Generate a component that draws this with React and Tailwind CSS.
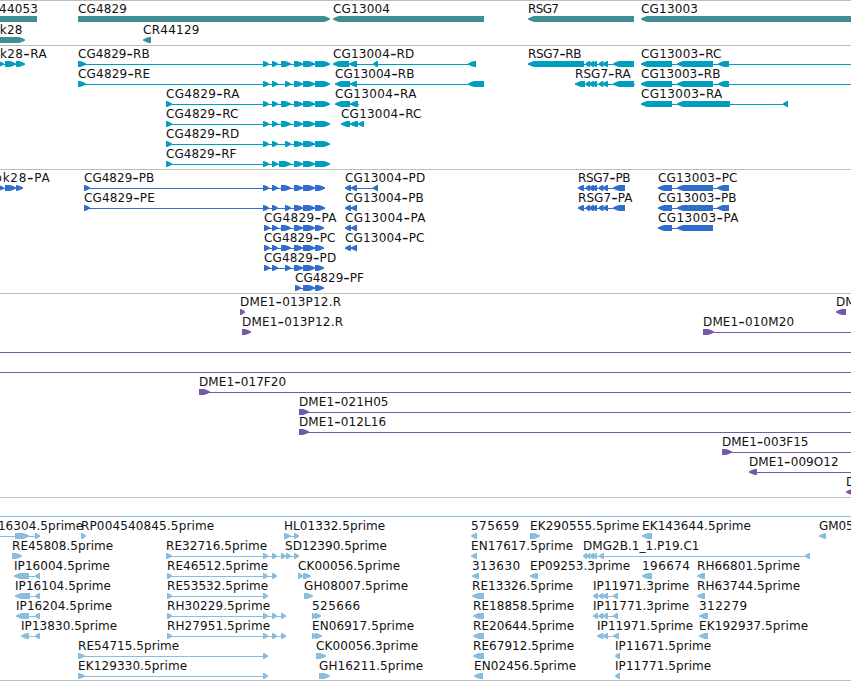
import React from 'react';

// feature: [row, label, label x, label end, strand, exons, line start, line end]
const head = [[263, 269], [272, 278]];
const tail = [[294, 303], [303, 315]];
const rsg7 = [[585.5, 590], [589, 594], [592.5, 597], [598.5, 603.5], [603, 608]];
const ip = [[593, 598], [598.5, 603.5], [603, 608], [613, 618]];

const tracks = [
  {
    name: 'genes',
    height: 45,
    pitch: 21,
    color: '#3f8e93',
    features: [
      [0, 'CR44053', -18, 38, '-', [[-18, 37]]],
      [0, 'CG4829', 78, 127, '+', [[78, 330]]],
      [0, 'CG13004', 333, 390, '-', [[333, 484]]],
      [0, 'RSG7', 528, 559, '-', [[528, 634]]],
      [0, 'CG13003', 641, 698, '-', [[641, 870]]],
      [1, 'ppk28', -16, 22.5, '+', [[-16, 25]]],
      [1, 'CR44129', 143, 199.5, '-', [[143, 151]]],
    ],
  },
  {
    name: 'transcripts',
    height: 124,
    pitch: 20,
    color: '#009fc0',
    features: [
      [0, 'ppk28-RA', -16, 46.7, '+', [[-2, 4], [5, 16], [16, 25]], -16],
      [0, 'CG4829-RB', 78, 149.7, '+', [[78, 86], ...head, [281, 291], ...tail, [315, 330]]],
      [1, 'CG4829-RE', 78, 150.2, '+', [[78, 86], ...head, [285, 291], ...tail, [315, 330]]],
      [2, 'CG4829-RA', 166, 239.5, '+', [[166, 172], ...head, [281, 291], ...tail, [315, 330]]],
      [3, 'CG4829-RC', 166, 238.5, '+', [[166, 172], ...head, [281, 291], ...tail, [315, 330]]],
      [4, 'CG4829-RD', 166, 239.2, '+', [[166, 172], ...head, [285, 291], ...tail, [315, 330]]],
      [5, 'CG4829-RF', 166, 236.5, '+', [[166, 172], ...head, [279, 291], ...tail, [315, 330]]],
      [0, 'CG13004-RD', 333, 414.3, '-', [[333, 349], [349, 357], [373, 378], [468, 476]]],
      [1, 'CG13004-RB', 335, 414.5, '-', [[335, 350], [350, 357], [468, 484]]],
      [2, 'CG13004-RA', 335, 416.5, '-', [[335, 350], [350, 358]], 335, 359],
      [3, 'CG13004-RC', 341, 421.5, '-', [[341, 350], [350, 358], [358, 364]]],
      [0, 'RSG7-RB', 528, 581.5, '-', [[528, 584], ...rsg7, [613, 634]]],
      [1, 'RSG7-RA', 575, 630.7, '-', [[575, 585], ...rsg7, [613, 634]], 575, 635],
      [0, 'CG13003-RC', 641, 721.5, '-', [[641, 672], [677, 713], [718, 729]], 641, 851],
      [1, 'CG13003-RB', 641, 720.5, '-', [[641, 672], [677, 713], [718, 729]], 641, 851],
      [2, 'CG13003-RA', 641, 722.3, '-', [[641, 672], [677, 730], [783, 788]]],
    ],
  },
  {
    name: 'proteins',
    height: 124,
    pitch: 20,
    color: '#306dcd',
    features: [
      [0, 'ppk28-PA', -14, 49.7, '+', [[-2, 4], [5, 16], [16, 23]], -12],
      [0, 'CG4829-PB', 84, 154.3, '+', [[84, 90], ...head, [281, 291], ...tail, [315, 325]]],
      [1, 'CG4829-PE', 84, 154.8, '+', [[84, 90], ...head, [285, 291], ...tail, [315, 325]]],
      [2, 'CG4829-PA', 264, 336.5, '+', [[264, 270], [272, 278], [281, 291], ...tail, [315, 324]]],
      [3, 'CG4829-PC', 264, 335.5, '+', [[264, 270], [272, 278], [281, 291], ...tail, [315, 324]]],
      [4, 'CG4829-PD', 264, 336.2, '+', [[264, 270], [272, 278], [285, 291], ...tail, [315, 324]]],
      [5, 'CG4829-PF', 295, 364, '+', [[295, 301], [303, 315], [315, 324]]],
      [0, 'CG13004-PD', 345, 425.2, '-', [[345, 351], [351, 357], [373, 378]]],
      [1, 'CG13004-PB', 345, 423.7, '-', [[345, 351], [351, 357]]],
      [2, 'CG13004-PA', 345, 425.5, '-', [[345, 351], [351, 357]]],
      [3, 'CG13004-PC', 345, 424.5, '-', [[345, 351], [351, 357]]],
      [0, 'RSG7-PB', 578, 630.5, '-', [[578, 584], ...rsg7, [613, 625]]],
      [1, 'RSG7-PA', 578, 632.5, '-', [[578, 584], ...rsg7, [613, 625]]],
      [0, 'CG13003-PC', 658, 737.5, '-', [[658, 672], [677, 713], [717, 729]]],
      [1, 'CG13003-PB', 658, 736.5, '-', [[658, 672], [677, 713], [717, 729]]],
      [2, 'CG13003-PA', 658, 738.5, '-', [[658, 672], [677, 713]]],
    ],
  },
  {
    name: 'bacs',
    height: 204,
    pitch: 20,
    color: '#7459a8',
    features: [
      [0, 'DME1-013P12.R', 240, 341, '+', [[240, 245]]],
      [1, 'DME1-013P12.R', 242, 343, '+', [[242, 251]]],
      [0, 'DME1-013L19', 836, 922, '-', [[836, 846]]],
      [1, 'DME1-010M20', 703, 794.2, '+', [[703, 714]], 703, 851],
      [2, '', 0, 0, '+', [], 0, 851],
      [3, '', 0, 0, '+', [], 0, 851],
      [4, 'DME1-017F20', 199, 286.2, '+', [[199, 210]], 199, 851],
      [5, 'DME1-021H05', 299, 388.5, '+', [[299, 309]], 299, 851],
      [6, 'DME1-012L16', 299, 386.2, '+', [[299, 309]], 299, 851],
      [7, 'DME1-003F15', 722, 808.5, '+', [[722, 732]], 722, 851],
      [8, 'DME1-009O12', 749, 838.7, '-', [[749, 757]], 749, 851],
      [9, 'DME1-014K05', 846, 934, '-', [[846, 856]]],
    ],
  },
  {
    name: 'ests',
    height: 183,
    pitch: 20,
    color: '#88bddd',
    features: [
      [0, '', 0, 0, '+', [], 0, 851],
      [1, 'IP16304.5prime', -13, 83.2, '+', [[15, 29], [35, 40]], -13],
      [1, 'RP004540845.5prime', 81, 214.2, '+', [[81, 86]]],
      [1, 'HL01332.5prime', 284, 385.2, '+', [[284, 291], [294, 299]]],
      [1, '575659', 471, 519.2, '-', [[471, 477]]],
      [1, 'EK290555.5prime', 530, 639.2, '+', [[530, 540]]],
      [1, 'EK143644.5prime', 642, 751, '-', [[642, 652]]],
      [1, 'GM05412.5prime', 819, 922, '-', [[819, 826]]],
      [2, 'RE45808.5prime', 12, 113.2, '+', [[12, 22]]],
      [2, 'RE32716.5prime', 166, 267.2, '+', [[166, 172], [263, 268], [272, 277], [281, 286]]],
      [2, 'SD12390.5prime', 285, 387, '+', [[286, 291], [294, 299]]],
      [2, 'EN17617.5prime', 471, 573.2, '-', [[471, 477]]],
      [2, 'DMG2B.1_1.P19.C1', 583, 699.5, '-', [[583, 587], [586.5, 590.5], [590, 594], [593, 597], [599, 604], [805, 810]]],
      [3, 'IP16004.5prime', 14, 110, '-', [[14, 29], [35, 40]]],
      [3, 'RE46512.5prime', 167, 268.2, '+', [[167, 172], [263, 268], [272, 277]]],
      [3, 'CK00056.5prime', 298, 400.2, '+', [[298, 303], [303, 311]]],
      [3, '313630', 472, 520.2, '-', [[472, 479]]],
      [3, 'EP09253.3prime', 530, 630.2, '-', [[530, 538]]],
      [3, '196674', 642, 690, '-', [[642, 652]]],
      [3, 'RH66801.5prime', 697, 800.2, '-', [[697, 705]]],
      [4, 'IP16104.5prime', 15, 111, '-', [[15, 30], [35, 40]]],
      [4, 'RE53532.5prime', 167, 268.2, '+', [[167, 172], [263, 268]]],
      [4, 'GH08007.5prime', 304, 408.2, '+', [[304, 313]]],
      [4, 'RE13326.5prime', 472, 573.2, '-', [[472, 484]]],
      [4, 'IP11971.3prime', 593, 689.2, '-', ip],
      [4, 'RH63744.5prime', 697, 800.2, '-', [[697, 705]]],
      [5, 'IP16204.5prime', 16, 112.2, '-', [[16, 29], [35, 40]]],
      [5, 'RH30229.5prime', 167, 270.2, '+', [[167, 172], [263, 268], [272, 277], [281, 286]]],
      [5, '525666', 312, 360.2, '+', [[312, 316], [315, 321]]],
      [5, 'RE18858.5prime', 473, 574.2, '-', [[473, 484]]],
      [5, 'IP11771.3prime', 593, 689.2, '-', ip],
      [5, '312279', 699, 747.2, '-', [[699, 708]]],
      [6, 'IP13830.5prime', 21, 117.2, '-', [[21, 29], [35, 40]]],
      [6, 'RH27951.5prime', 167, 270.2, '+', [[167, 172], [263, 268], [272, 277], [281, 286]]],
      [6, 'EN06917.5prime', 312, 414.2, '+', [[312, 316], [315, 322]]],
      [6, 'RE20644.5prime', 473, 574.2, '-', [[473, 484]]],
      [6, 'IP11971.5prime', 597, 693.2, '-', [[597, 603.5], [603, 608], [613, 619]]],
      [6, 'EK192937.5prime', 699, 808.2, '-', [[699, 708]]],
      [7, 'RE54715.5prime', 78, 179.2, '+', [[78, 85], [263, 268]]],
      [7, 'CK00056.3prime', 316, 418.2, '+', [[316, 326]]],
      [7, 'RE67912.5prime', 473, 574.2, '-', [[473, 484]]],
      [7, 'IP11671.5prime', 615, 711.2, '-', [[615, 620]]],
      [8, 'EK129330.5prime', 78, 187.2, '+', [[78, 85], [263, 268]]],
      [8, 'GH16211.5prime', 319, 423.2, '+', [[319, 330]]],
      [8, 'EN02456.5prime', 474, 576.2, '-', [[474, 483]]],
      [8, 'IP11771.5prime', 615, 711.2, '-', [[615, 620]]],
    ],
  },
];

const exonPoints = (x0, x1, y, strand) => {
  const tip = Math.min(x1 - x0 - 1, 6);
  return strand === '+'
    ? `${x0},${y} ${x1 - tip},${y} ${x1 - tip / 2},${y + 1} ${x1},${y + 2.5} ${x1},${y + 3.5} ${x1 - tip / 2},${y + 5} ${x1 - tip},${y + 6} ${x0},${y + 6}`
    : `${x1},${y} ${x0 + tip},${y} ${x0 + tip / 2},${y + 1} ${x0},${y + 2.5} ${x0},${y + 3.5} ${x0 + tip / 2},${y + 5} ${x0 + tip},${y + 6} ${x1},${y + 6}`;
};

// the dash is drawn wider than the font's own hyphen
const Label = ({ x, y, end, text }) => {
  const [name, suffix] = text.split('-');
  return (
    <text x={x} y={y} textLength={end - x} className="fill-[#111]">
      {name}
      {suffix && (
        <>
          <tspan dy="1" className="text-[18px]">-</tspan>
          <tspan dy="-1">{suffix}</tspan>
        </>
      )}
    </text>
  );
};

const Feature = ({ feature, pitch }) => {
  const [row, label, x, end, strand, exons, from, to] = feature;
  const y = 16 + row * pitch;
  const lineStart = from ?? exons[0][0];
  const lineEnd = to ?? exons[exons.length - 1][1];

  return (
    <g>
      {(exons.length !== 1 || to) && (
        <rect x={lineStart} y={y + 3} width={lineEnd - lineStart} height="1" />
      )}
      {exons.map(([x0, x1]) => (
        <polygon key={x0} points={exonPoints(x0, x1, y, strand)} />
      ))}
      {label && <Label x={x} y={y - 3} end={end} text={label} />}
    </g>
  );
};

const Track = ({ track }) => (
  <section
    className="w-full shrink-0 border-t border-[#bebebe]"
    style={{ height: track.height, color: track.color }}
  >
    <svg
      width="851"
      height={track.height}
      viewBox={`0 0 851 ${track.height}`}
      fill="currentColor"
      className="-mt-px block font-['DejaVu_Sans',sans-serif] text-[12px]"
    >
      {track.features.map((feature, i) => (
        <Feature key={i} feature={feature} pitch={track.pitch} />
      ))}
    </svg>
  </section>
);

const App = () => {
  return (
    <main className="flex h-[681px] w-[851px] flex-col overflow-hidden border-b border-[#bebebe] bg-white">
      {tracks.map((track) => (
        <Track key={track.name} track={track} />
      ))}
    </main>
  );
};

export default App;
